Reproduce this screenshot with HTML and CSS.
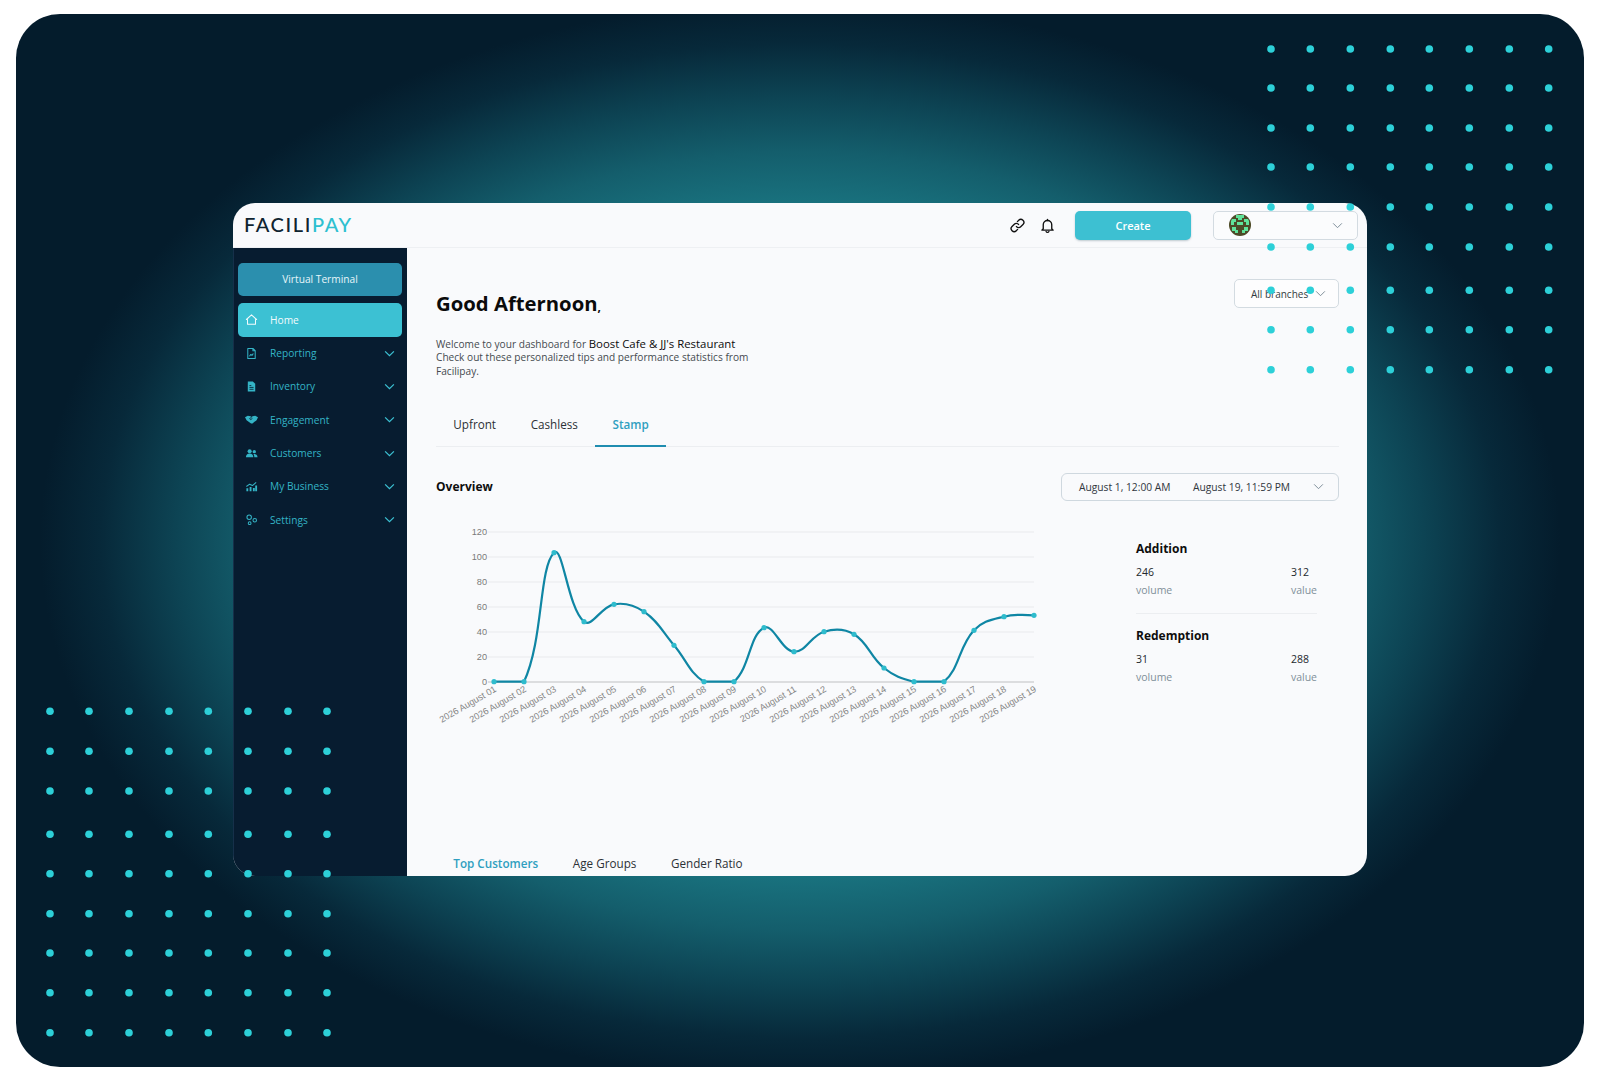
FILE: index.html
```html
<!DOCTYPE html>
<html lang="en">
<head>
<meta charset="utf-8">
<title>Facilipay dashboard</title>
<link rel="stylesheet" href="styles.css">
</head>
<body>
<div class="stage">
  <div class="app">
    <header class="topbar">
      <div class="logo">FACILI<span class="logo-accent">PAY</span></div>
      <div class="top-actions">
        <svg class="top-icon" viewBox="0 0 24 24"><path d="M10.500 13.500a4 4 0 0 0 6 .4l3.200-3.200a4.200 4.200 0 0 0-6-6l-1.800 1.800"/><path d="M13.500 10.500a4 4 0 0 0-6-.4l-3.200 3.200a4.200 4.200 0 0 0 6 6l1.800-1.800"/></svg>
        <svg class="top-icon" viewBox="0 0 24 24"><path d="M6 16.500V11a6 6 0 0 1 12 0v5.500l2 2H4z"/><path d="M10 20.500a2.200 2.200 0 0 0 4 0"/><path d="M12 5V3.500"/></svg>
        <button class="create-btn">Create</button>
        <div class="account">
          <svg class="avatar" viewBox="0 0 22 22">
            <circle cx="11" cy="11" r="11" fill="#4c4a26"/>
            <path fill="#5fe39a" d="M7 1h8v3h-2v2H9V4H7zM3 5h4v3H5v3H2V7zM15 5h4l1 2v4h-3V8h-2zM8 8h6v3H8zM3 13h4v3h2v3H6v-2H3zM15 13h4v4h-3v2h-3v-3h2z"/>
          </svg>
          <svg class="chev chev-grey" viewBox="0 0 12 8"><path d="M1 1.500l5 5 5-5"/></svg>
        </div>
      </div>
    </header>
    <div class="body">
      <nav class="sidebar">
        <div class="terminal-btn">Virtual Terminal</div>
        <div class="nav-item nav-active">
          <svg class="nav-icon" viewBox="0 0 14 14"><path class="ln" d="M1.500 7L7 2l5.500 5-1.200 0V12H2.700V7z"/></svg>
          <span>Home</span>
        </div>
        <div class="nav-item">
          <svg class="nav-icon" viewBox="0 0 14 14"><path class="ln" d="M3 1.500h5.500L11 4v8.500H3zM8.500 1.500V4H11"/><path class="ln" d="M4.800 10l1.500-2 1.200 1 1.500-2"/></svg>
          <span>Reporting</span>
          <svg class="chev" viewBox="0 0 12 8"><path d="M1 1.500l5 5 5-5"/></svg>
        </div>
        <div class="nav-item">
          <svg class="nav-icon" viewBox="0 0 14 14"><path class="fl" d="M3 1.500h5.500L11 4v8.500H3z"/><path class="cut" d="M4.800 8h4.400M4.800 10h4.400M4.800 6h2"/></svg>
          <span>Inventory</span>
          <svg class="chev" viewBox="0 0 12 8"><path d="M1 1.500l5 5 5-5"/></svg>
        </div>
        <div class="nav-item">
          <svg class="nav-icon" viewBox="0 0 14 14"><path class="fl" d="M0 4.500L3 3l3 .6L7 4.300 8.200 3.600 11 3l3 1.500-1.500 3.200L8 11.200H6.500L1.700 7.700z"/><path class="cut" d="M7 4.300L5 6.300l1.200.8L8 5.800"/></svg>
          <span>Engagement</span>
          <svg class="chev" viewBox="0 0 12 8"><path d="M1 1.500l5 5 5-5"/></svg>
        </div>
        <div class="nav-item">
          <svg class="nav-icon" viewBox="0 0 14 14"><circle class="fl" cx="5" cy="4.500" r="2.200"/><circle class="fl" cx="10" cy="5" r="1.800"/><path class="fl" d="M1 11c0-2.500 1.500-4 4-4s4 1.500 4 4zM9.800 7.500c2 0 3.700 1 3.700 3.500h-3.500c0-1.500-.2-2.500-1-3.200z"/></svg>
          <span>Customers</span>
          <svg class="chev" viewBox="0 0 12 8"><path d="M1 1.500l5 5 5-5"/></svg>
        </div>
        <div class="nav-item">
          <svg class="nav-icon" viewBox="0 0 14 14"><path class="fl" d="M1.500 9h2v3h-2zM5 7.500h2V12H5zM8.500 8.500h2V12h-2zM11 6h2v6h-2z"/><path class="ln" d="M1.500 7l3.500-2.500 3 1.500 4-3.500"/></svg>
          <span>My Business</span>
          <svg class="chev" viewBox="0 0 12 8"><path d="M1 1.500l5 5 5-5"/></svg>
        </div>
        <div class="nav-item">
          <svg class="nav-icon" viewBox="0 0 14 14"><circle class="ring" cx="4.500" cy="4.500" r="2.400"/><circle class="ring" cx="10.500" cy="7.800" r="1.900"/><circle class="ring" cx="5" cy="11" r="1.500"/></svg>
          <span>Settings</span>
          <svg class="chev" viewBox="0 0 12 8"><path d="M1 1.500l5 5 5-5"/></svg>
        </div>
      </nav>
      <main class="main">
        <div class="head">
          <div class="greet">
            <h1 class="title">Good Afternoon<span class="comma">,</span></h1>
            <p class="intro">Welcome to your dashboard for <strong class="biz">Boost Cafe &amp; JJ's Restaurant</strong> Check out these personalized tips and performance statistics from Facilipay.</p>
          </div>
          <div class="branch">All branches
            <svg class="chev chev-grey" viewBox="0 0 12 8"><path d="M1 1.500l5 5 5-5"/></svg>
          </div>
        </div>
        <div class="tabs">
          <div class="tab">Upfront</div>
          <div class="tab">Cashless</div>
          <div class="tab tab-active">Stamp</div>
        </div>
        <div class="overview-row">
          <div class="overview">Overview</div>
          <div class="dates">
            <span class="date">August 1, 12:00 AM</span>
            <span class="date">August 19, 11:59 PM</span>
            <svg class="chev chev-grey" viewBox="0 0 12 8"><path d="M1 1.500l5 5 5-5"/></svg>
          </div>
        </div>
        <div class="content">
          <svg class="chart" viewBox="436 522 604 220">
            <g class="grid">
              <path d="M488 533H1034M488 558H1034M488 583H1034M488 608H1034M488 633H1034M488 658H1034"/>
            </g>
            <path class="zero" d="M488 683H1034"/>
            <g class="y-labels">
              <text x="487" y="536">120</text><text x="487" y="561">100</text><text x="487" y="586">80</text><text x="487" y="611">60</text><text x="487" y="636">40</text><text x="487" y="661">20</text><text x="487" y="686">0</text>
            </g>
            <g class="x-labels">
              <text transform="translate(497 692) rotate(-30)">2026 August 01</text>
              <text transform="translate(527 692) rotate(-30)">2026 August 02</text>
              <text transform="translate(557 692) rotate(-30)">2026 August 03</text>
              <text transform="translate(587 692) rotate(-30)">2026 August 04</text>
              <text transform="translate(617 692) rotate(-30)">2026 August 05</text>
              <text transform="translate(647 692) rotate(-30)">2026 August 06</text>
              <text transform="translate(677 692) rotate(-30)">2026 August 07</text>
              <text transform="translate(707 692) rotate(-30)">2026 August 08</text>
              <text transform="translate(737 692) rotate(-30)">2026 August 09</text>
              <text transform="translate(767 692) rotate(-30)">2026 August 10</text>
              <text transform="translate(797 692) rotate(-30)">2026 August 11</text>
              <text transform="translate(827 692) rotate(-30)">2026 August 12</text>
              <text transform="translate(857 692) rotate(-30)">2026 August 13</text>
              <text transform="translate(887 692) rotate(-30)">2026 August 14</text>
              <text transform="translate(917 692) rotate(-30)">2026 August 15</text>
              <text transform="translate(947 692) rotate(-30)">2026 August 16</text>
              <text transform="translate(977 692) rotate(-30)">2026 August 17</text>
              <text transform="translate(1007 692) rotate(-30)">2026 August 18</text>
              <text transform="translate(1037 692) rotate(-30)">2026 August 19</text>
            </g>
            <path class="line" d="M494 682.700L524 682.700C543.600 640.600 538.700 569 554 553.700C562.700 545 567.600 608.600 584 622.700C591.600 629.200 601.300 607.400 614 605.300C625.300 603.400 634.200 606 644 612.700C658.200 622.400 662.300 632.600 674 646.300C686.300 660.600 689.300 673.800 704 682.700C713.300 682.700 726.200 682.700 734 682.700C750.200 668.200 749.200 636.100 764 628.700C773.200 624.100 781.600 651.900 794 652.700C805.600 653.500 810.900 636.500 824 632.700C834.900 629.500 844.400 629.500 854 635.300C868.400 644 870.100 658.100 884 669C894.100 677 901.400 679.800 914 682.700C925.400 682.700 936 682.700 944 682.700C960 669 958.500 648 974 631.300C982.500 622 991.400 620.800 1004 617.700C1015.400 614.800 1034 616.300 1034 616.300"/>
            <g class="points">
              <circle cx="494" cy="682.700" r="2.600"/><circle cx="524" cy="682.700" r="2.600"/><circle cx="554" cy="553.700" r="2.600"/><circle cx="584" cy="622.700" r="2.600"/><circle cx="614" cy="605.300" r="2.600"/><circle cx="644" cy="612.700" r="2.600"/><circle cx="674" cy="646.300" r="2.600"/><circle cx="704" cy="682.700" r="2.600"/><circle cx="734" cy="682.700" r="2.600"/><circle cx="764" cy="628.700" r="2.600"/><circle cx="794" cy="652.700" r="2.600"/><circle cx="824" cy="632.700" r="2.600"/><circle cx="854" cy="635.300" r="2.600"/><circle cx="884" cy="669" r="2.600"/><circle cx="914" cy="682.700" r="2.600"/><circle cx="944" cy="682.700" r="2.600"/><circle cx="974" cy="631.300" r="2.600"/><circle cx="1004" cy="617.700" r="2.600"/><circle cx="1034" cy="616.300" r="2.600"/>
            </g>
          </svg>
          <aside class="stats">
            <section class="stat-block stat-first">
              <h2 class="stat-title">Addition</h2>
              <div class="stat-row"><span class="num">246</span><span class="num num-r">312</span></div>
              <div class="stat-row"><span class="cap">volume</span><span class="cap">value</span></div>
            </section>
            <section class="stat-block">
              <h2 class="stat-title">Redemption</h2>
              <div class="stat-row"><span class="num">31</span><span class="num num-r">288</span></div>
              <div class="stat-row"><span class="cap">volume</span><span class="cap">value</span></div>
            </section>
          </aside>
        </div>
        <div class="tabs-lower">
          <div class="tab tab-blue">Top Customers</div>
          <div class="tab">Age Groups</div>
          <div class="tab">Gender Ratio</div>
        </div>
      </main>
    </div>
  </div>
  <svg class="dots" viewBox="16 14 1568 1053">
    <defs>
      <g id="row-right"><circle cx="1271" r="3.800"/><circle cx="1310.300" r="3.800"/><circle cx="1350.300" r="3.800"/><circle cx="1390.300" r="3.800"/><circle cx="1429.300" r="3.800"/><circle cx="1469.300" r="3.800"/><circle cx="1509.300" r="3.800"/><circle cx="1548.700" r="3.800"/></g>
      <g id="row-left"><circle cx="50" r="3.800"/><circle cx="89" r="3.800"/><circle cx="129" r="3.800"/><circle cx="169" r="3.800"/><circle cx="208.300" r="3.800"/><circle cx="248" r="3.800"/><circle cx="288" r="3.800"/><circle cx="327" r="3.800"/></g>
    </defs>
    <use href="#row-right" y="49"/><use href="#row-right" y="88"/><use href="#row-right" y="128"/><use href="#row-right" y="167"/><use href="#row-right" y="207"/><use href="#row-right" y="247"/><use href="#row-right" y="290.300"/><use href="#row-right" y="329.700"/><use href="#row-right" y="369.700"/>
    <use href="#row-left" y="711.300"/><use href="#row-left" y="751.300"/><use href="#row-left" y="791"/><use href="#row-left" y="834.300"/><use href="#row-left" y="873.700"/><use href="#row-left" y="913.700"/><use href="#row-left" y="953"/><use href="#row-left" y="992.700"/><use href="#row-left" y="1032.700"/>
  </svg>
</div>
</body>
</html>
```

FILE: styles.css
```css
* { box-sizing: border-box; }

html, body { margin: 0; background: #fff; }

body {
  padding: 14px 16px 13px;
  font-family: "Open Sans", "Liberation Sans", sans-serif;
  color: #111;
}

.stage {
  position: relative;
  height: 1053px;
  padding: 189px 0 0 217px;
  border-radius: 44px;
  overflow: hidden;
  background:
    radial-gradient(ellipse 760px 540px at 50% 50%, #1b7d89 0%, #1a7682 60%, #145e6c 72%, #0d4454 82%, #07293a 92%, #041c2c 100%),
    #041c2c;
}

.dots {
  position: absolute;
  inset: 0;
  width: 100%;
  height: 100%;
  fill: #2dd0d8;
  pointer-events: none;
}

.app {
  display: flex;
  flex-direction: column;
  width: 1134px;
  height: 673px;
  border-radius: 22px;
  overflow: hidden;
  background: #f9fafc;
}

.topbar {
  display: flex;
  align-items: center;
  height: 45px;
  padding: 0 9px 0 11px;
  border-bottom: 1px solid #eef0f3;
  flex: none;
}

.logo {
  font-family: Lato, "Liberation Sans", sans-serif;
  font-size: 20px;
  font-weight: 500;
  letter-spacing: 1.600px;
  color: #0f2430;
  padding-bottom: 3px;
}

.logo-accent { color: #2ec0d0; }

.top-actions {
  display: flex;
  align-items: center;
  margin-left: auto;
}

.top-icon {
  width: 17px;
  height: 17px;
  margin-right: 13px;
  fill: none;
  stroke: #111;
  stroke-width: 1.900;
  stroke-linecap: round;
  stroke-linejoin: round;
}

.create-btn {
  width: 116px;
  height: 29px;
  margin: 0 22px 0 6px;
  border: 0;
  border-radius: 5px;
  background: #3dc0d2;
  box-shadow: 0 1px 2px rgba(20, 60, 80, .25);
  color: #fff;
  font: 600 11px "Open Sans", sans-serif;
}

.account {
  display: flex;
  align-items: center;
  width: 145px;
  height: 29px;
  padding: 0 14px 0 15px;
  border: 1.500px solid #d3dbe1;
  border-radius: 5px;
  background: #fbfcfd;
}

.avatar { width: 22px; height: 22px; }

.chev {
  width: 11px;
  height: 7px;
  margin-left: auto;
  fill: none;
  stroke: #3cc1d3;
  stroke-width: 1.400;
  flex: none;
}

.chev-grey { stroke: #7b8a96; stroke-width: 1.100; }

.body {
  display: flex;
  flex: 1;
  min-height: 0;
}

.sidebar {
  width: 174px;
  padding: 15px 5px 0 4px;
  background: #071c30;
  border-left: 1px solid #16304a;
  flex: none;
}

.terminal-btn {
  height: 33px;
  margin-bottom: 7px;
  border-radius: 5px;
  background: #2b8fae;
  color: #e7f6fa;
  font-size: 10.200px;
  line-height: 33px;
  text-align: center;
}

.nav-item {
  display: flex;
  align-items: center;
  height: 33.300px;
  padding: 0 7px;
  color: #34b4c6;
  font-size: 10.200px;
}

.nav-item span { margin-left: 12px; }

.nav-active {
  height: 33.500px;
  border-radius: 5px;
  background: #3cc1d3;
  color: #f2fbfd;
}

.nav-icon {
  width: 13px;
  height: 13px;
  flex: none;
  overflow: visible;
}

.ln, .ring { fill: none; stroke: #34b4c6; stroke-width: 1.100; stroke-linejoin: round; }
.fl { fill: #34b4c6; }
.cut { fill: none; stroke: #071c30; stroke-width: .9; }
.nav-active .ln { stroke: #f2fbfd; }

.main {
  flex: 1;
  min-width: 0;
  padding: 31px 28px 0 29px;
  overflow: hidden;
}

.head {
  display: flex;
  justify-content: space-between;
  align-items: flex-start;
}

.title {
  margin: 10px 0 0;
  font-size: 20.300px;
  font-weight: 700;
  line-height: 28px;
  color: #0b0b0b;
}

.comma { font-size: 12px; }

.intro {
  width: 322px;
  margin: 16px 0 0;
  font-size: 10.150px;
  line-height: 13.300px;
  color: #454a50;
}

.biz {
  font-weight: 400;
  font-size: 11.400px;
  color: #0c0c0c;
}

.branch {
  display: flex;
  align-items: center;
  width: 105px;
  height: 29px;
  padding: 0 12px 0 16px;
  border: 1.500px solid #d3dbe1;
  border-radius: 5px;
  background: #fdfdfe;
  font-size: 10px;
  color: #333a40;
}

.tabs {
  display: flex;
  margin-top: 38px;
  border-bottom: 1px solid #eceef1;
  height: 31px;
}

.tab {
  height: 31px;
  padding: 0 17.300px;
  font-size: 11.700px;
  line-height: 16px;
  color: #2c3136;
}

.tab-active {
  color: #2f9fc0;
  font-weight: 600;
  border-bottom: 2px solid #1f8db0;
}

.tab-blue { color: #2f9fc0; font-weight: 600; }

.overview-row {
  display: flex;
  justify-content: space-between;
  align-items: center;
  margin-top: 26px;
}

.overview {
  font-size: 12px;
  font-weight: 700;
  color: #0e0e0e;
}

.dates {
  display: flex;
  align-items: center;
  gap: 22.500px;
  width: 278px;
  height: 28px;
  padding: 0 15px 0 17px;
  border: 1.500px solid #cfd8df;
  border-radius: 6px;
  font-size: 10.250px;
  color: #30363c;
}

.date {
  white-space: nowrap;
  flex: none;
}

.content {
  display: flex;
  margin-top: 20px;
}

.chart {
  width: 604px;
  height: 220px;
  flex: none;
}

.grid path { fill: none; stroke: #e9eaed; stroke-width: 1; }
.zero { fill: none; stroke: #d2d3d6; stroke-width: 1.500; }
.y-labels text { font: 9.200px "Liberation Sans", sans-serif; fill: #7a7a7a; text-anchor: end; }
.x-labels text { font: 9.200px "Liberation Sans", sans-serif; fill: #858585; text-anchor: end; }
.line { fill: none; stroke: #0f86a4; stroke-width: 2.200; }
.points circle { fill: #2fbccd; }

.stats {
  width: 181px;
  margin-left: 96px;
  padding-top: 20px;
}

.stat-block + .stat-block {
  margin-top: 14px;
  padding-top: 14px;
  border-top: 1px solid #eceef1;
}

.stat-title {
  margin: 0 0 6px;
  font-size: 12px;
  font-weight: 700;
  line-height: 16px;
  color: #0e0e0e;
}

.stat-row {
  display: flex;
  justify-content: space-between;
  height: 18px;
  align-items: center;
}

.num {
  font-size: 10.500px;
  font-weight: 500;
  color: #23282d;
}

.num-r { width: 26px; }

.cap {
  font-size: 10.500px;
  color: #7f8f99;
}

.tabs-lower {
  display: flex;
  margin-top: 114px;
}
```
